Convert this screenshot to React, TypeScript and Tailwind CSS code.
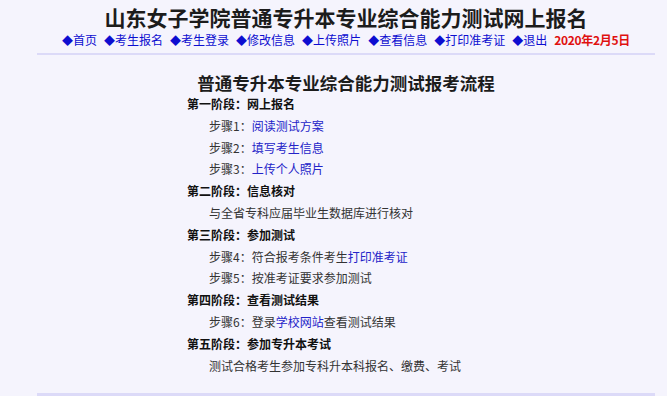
import React from 'react'

// 顶部导航链接
const navLinks = ['首页', '考生报名', '考生登录', '修改信息', '上传照片', '查看信息', '打印准考证', '退出']

type Part = { text: string; link?: boolean }

// 报考流程：阶段 + 步骤
const stages: Array<{ title: string; rows: Part[][] }> = [
  {
    title: '第一阶段：网上报名',
    rows: [
      [{ text: '步骤1：' }, { text: '阅读测试方案', link: true }],
      [{ text: '步骤2：' }, { text: '填写考生信息', link: true }],
      [{ text: '步骤3：' }, { text: '上传个人照片', link: true }]
    ]
  },
  {
    title: '第二阶段：信息核对',
    rows: [[{ text: '与全省专科应届毕业生数据库进行核对' }]]
  },
  {
    title: '第三阶段：参加测试',
    rows: [
      [{ text: '步骤4：符合报考条件考生' }, { text: '打印准考证', link: true }],
      [{ text: '步骤5：按准考证要求参加测试' }]
    ]
  },
  {
    title: '第四阶段：查看测试结果',
    rows: [[{ text: '步骤6：登录' }, { text: '学校网站', link: true }, { text: '查看测试结果' }]]
  },
  {
    title: '第五阶段：参加专升本考试',
    rows: [[{ text: '测试合格考生参加专科升本科报名、缴费、考试' }]]
  }
]

export default function App() {
  return (
    <div
      className="w-[667px] h-[396px] overflow-hidden bg-[#f5f4fd]"
      style={{ fontFamily: '"Noto Sans CJK SC", "Liberation Sans", sans-serif' }}
    >
      <div className="ml-[37px] w-[618px] flex flex-col">
        {/* 标题 */}
        <h1 className="pt-[2px] h-[32px] leading-[30px] text-center text-[21px] font-bold text-[#1c1c1c]">
          山东女子学院普通专升本专业综合能力测试网上报名
        </h1>

        {/* 导航 */}
        <nav className="h-[16px] leading-[16px] flex justify-center items-center gap-[7px] text-[12px] text-[#0d0dd0]">
          {navLinks.map((label) => (
            <a key={label} href="#" className="whitespace-nowrap">
              <span className="text-[11px]">◆</span>
              {label}
            </a>
          ))}
          <span className="font-bold text-[#e01010] tracking-[-0.3px]">2020年2月5日</span>
        </nav>

        <div className="mt-[5px] h-[2px] bg-[#dcdaf8]" />

        {/* 流程标题 */}
        <h2 className="mt-[18px] h-[20px] leading-[20px] text-center text-[17.5px] font-bold text-[#1c1c1c]">
          普通专升本专业综合能力测试报考流程
        </h2>

        {/* 流程内容 */}
        <div className="pl-[150px] text-[12px]">
          {stages.map((stage) => (
            <div key={stage.title}>
              <div className="leading-[21.8px] font-bold text-[#111]">{stage.title}</div>
              {stage.rows.map((row, i) => (
                <div key={i} className="pl-[22px] leading-[21.8px] text-[#333]">
                  {row.map((p, j) =>
                    p.link ? (
                      <a key={j} href="#" className="text-[#2323c8]">
                        {p.text}
                      </a>
                    ) : (
                      <span key={j}>{p.text}</span>
                    )
                  )}
                </div>
              ))}
            </div>
          ))}
        </div>

        <div className="mt-[17px] h-[3px] bg-[#dcdaf8]" />
      </div>
    </div>
  )
}
